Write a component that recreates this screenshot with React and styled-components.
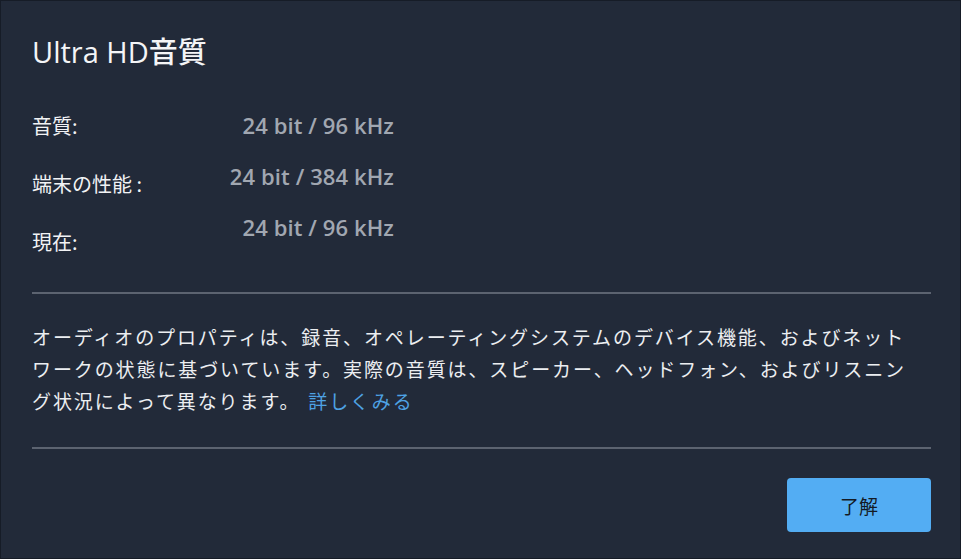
import React from 'react';
import styled, { createGlobalStyle } from 'styled-components';

const GlobalStyle = createGlobalStyle`
  html, body {
    margin: 0;
    padding: 0;
    background-color: #1a2130;
  }
  * {
    box-sizing: border-box;
  }
`;

const Dialog = styled.div`
  width: 961px;
  height: 559px;
  background-color: #222a39;
  border: 1px solid #161c27;
  padding: 33px 29px 0 31px;
  display: flex;
  flex-direction: column;
  font-family: "Open Sans", "Noto Sans CJK JP", sans-serif;
  color: #eef0f2;
`;

const Title = styled.h1`
  margin: 0;
  font-size: 29px;
  line-height: 36px;
  font-weight: 500;
  color: #f4f5f7;
`;

const InfoTable = styled.div`
  display: flex;
  margin-top: 42px;
`;

const Column = styled.div`
  display: flex;
  flex-direction: column;
  width: ${(p) => p.$width}px;
  gap: ${(p) => p.$gap}px;
  text-align: ${(p) => p.$align || 'left'};
`;

const Label = styled.div`
  font-family: "Noto Sans CJK JP", sans-serif;
  font-size: 20px;
  line-height: 28px;
  color: #f2f3f5;
`;

const Value = styled.div`
  font-family: "Open Sans", sans-serif;
  font-size: 22px;
  line-height: 28px;
  font-weight: 600;
  letter-spacing: 0.1px;
  color: #a1a7b1;
  margin-top: -1px;
`;

const Divider = styled.hr`
  margin: ${(p) => p.$top}px 0 0;
  border: none;
  height: 2px;
  background-color: #5c6370;
`;

const Description = styled.p`
  margin: 27px 12px 0 0;
  font-family: "Noto Sans CJK JP", sans-serif;
  font-size: 19px;
  letter-spacing: 1.9px;
  line-height: 32px;
  color: #eceef1;
`;

const LearnMore = styled.a`
  color: #4ea2e3;
  text-decoration: none;
  margin-left: 8px;
  cursor: pointer;
`;

const Footer = styled.div`
  display: flex;
  justify-content: flex-end;
  margin-top: 29px;
`;

const OkButton = styled.button`
  width: 144px;
  height: 54px;
  border: none;
  border-radius: 4px;
  background-color: #53adf3;
  color: #131a24;
  font-family: "Noto Sans CJK JP", sans-serif;
  font-size: 19px;
  cursor: pointer;
`;

const rows = [
  { label: '音質:', value: '24 bit / 96 kHz' },
  { label: '端末の性能 :', value: '24 bit / 384 kHz' },
  { label: '現在:', value: '24 bit / 96 kHz' },
];

const App = () => {
  return (
    <>
      <GlobalStyle />
      <Dialog>
        <Title>Ultra HD音質</Title>

        <InfoTable>
          <Column $width={190} $gap={30}>
            {rows.map((r) => (
              <Label key={r.label}>{r.label}</Label>
            ))}
          </Column>
          <Column $width={172} $gap={24} $align="right">
            {rows.map((r) => (
              <Value key={r.label}>{r.value}</Value>
            ))}
          </Column>
        </InfoTable>

        <Divider $top={36} />

        <Description>
          オーディオのプロパティは、録音、オペレーティングシステムのデバイス機能、およびネットワークの状態に基づいています。実際の音質は、スピーカー、ヘッドフォン、およびリスニング状況によって異なります。
          <LearnMore>詳しくみる</LearnMore>
        </Description>

        <Divider $top={30} />

        <Footer>
          <OkButton>了解</OkButton>
        </Footer>
      </Dialog>
    </>
  );
};

export default App;
